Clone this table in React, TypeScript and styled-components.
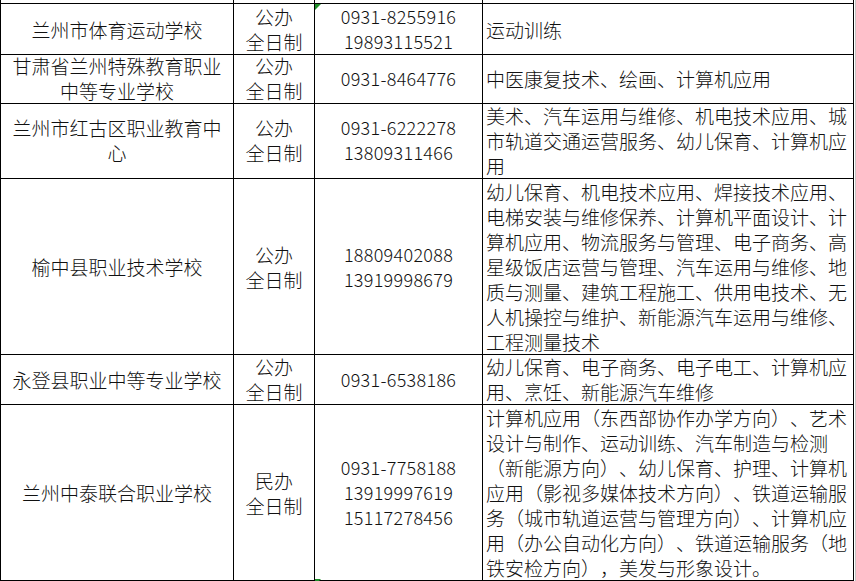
import React from "react";
import styled, { createGlobalStyle } from "styled-components";

const GlobalStyle = createGlobalStyle`
  html, body {
    margin: 0;
    padding: 0;
    background: #ffffff;
    overflow: hidden;
  }
  body {
    font-family: "Noto Sans CJK SC", "Noto Sans", sans-serif;
    color: #111;
    text-spacing-trim: space-all;
  }
`;

type School = {
  name: string[];
  kind: string[];
  phones: string[];
  majors: string[];
  h: number;
  flag?: boolean;
};

const schools: School[] = [
  {
    name: ["兰州市体育运动学校"],
    kind: ["公办", "全日制"],
    phones: ["0931-8255916", "19893115521"],
    majors: ["运动训练"],
    h: 49,
    flag: true,
  },
  {
    name: ["甘肃省兰州特殊教育职业", "中等专业学校"],
    kind: ["公办", "全日制"],
    phones: ["0931-8464776"],
    majors: ["中医康复技术、绘画、计算机应用"],
    h: 49,
  },
  {
    name: ["兰州市红古区职业教育中", "心"],
    kind: ["公办", "全日制"],
    phones: ["0931-6222278", "13809311466"],
    majors: [
      "美术、汽车运用与维修、机电技术应用、城",
      "市轨道交通运营服务、幼儿保育、计算机应",
      "用",
    ],
    h: 77,
  },
  {
    name: ["榆中县职业技术学校"],
    kind: ["公办", "全日制"],
    phones: ["18809402088", "13919998679"],
    majors: [
      "幼儿保育、机电技术应用、焊接技术应用、",
      "电梯安装与维修保养、计算机平面设计、计",
      "算机应用、物流服务与管理、电子商务、高",
      "星级饭店运营与管理、汽车运用与维修、地",
      "质与测量、建筑工程施工、供用电技术、无",
      "人机操控与维护、新能源汽车运用与维修、",
      "工程测量技术",
    ],
    h: 175,
  },
  {
    name: ["永登县职业中等专业学校"],
    kind: ["公办", "全日制"],
    phones: ["0931-6538186"],
    majors: [
      "幼儿保育、电子商务、电子电工、计算机应",
      "用、烹饪、新能源汽车维修",
    ],
    h: 51,
  },
  {
    name: ["兰州中泰联合职业学校"],
    kind: ["民办", "全日制"],
    phones: ["0931-7758188", "13919997619", "15117278456"],
    majors: [
      "计算机应用（东西部协作办学方向）、艺术",
      "设计与制作、运动训练、汽车制造与检测",
      "（新能源方向）、幼儿保育、护理、计算机",
      "应用（影视多媒体技术方向）、铁道运输服",
      "务（城市轨道运营与管理方向）、计算机应",
      "用（办公自动化方向）、铁道运输服务（地",
      "铁安检方向），美发与形象设计。",
    ],
    h: 174,
  },
];

function App() {
  return (
    <>
      <GlobalStyle />
      <Page>
        <Sheet>
          <Row $h={4}>
            <Cell />
            <Cell />
            <Cell />
            <Cell />
          </Row>
          {schools.map((s, i) => (
            <Row key={i} $h={s.h}>
              <Cell>
                <Lines>
                  {s.name.map((l, k) => (
                    <Line key={k}>{l}</Line>
                  ))}
                </Lines>
              </Cell>
              <Cell>
                <Lines>
                  {s.kind.map((l, k) => (
                    <Line key={k}>{l}</Line>
                  ))}
                </Lines>
              </Cell>
              <Cell $flag={s.flag}>
                <Lines>
                  {s.phones.map((l, k) => (
                    <Phone key={k}>{l}</Phone>
                  ))}
                </Lines>
              </Cell>
              <Cell $left>
                <Lines>
                  {s.majors.map((l, k) => (
                    <Line key={k}>{l}</Line>
                  ))}
                </Lines>
              </Cell>
            </Row>
          ))}
          <Row $h={10} $open>
            <Cell />
            <Cell />
            <Cell $flag />
            <Cell />
          </Row>
        </Sheet>
        <Gutter />
      </Page>
    </>
  );
}

export default App;

const Page = styled.div`
  display: flex;
  height: 581px;
  width: 856px;
  overflow: hidden;
`;

const Sheet = styled.div`
  display: flex;
  flex-direction: column;
  border-left: 1px solid #000;
`;

const Row = styled.div<{ $h: number; $open?: boolean }>`
  display: grid;
  grid-template-columns: 233px 81px 168px 371px;
  height: ${({ $h }) => $h}px;
  flex-shrink: 0;
  & > div {
    border-bottom: ${({ $open }) => ($open ? "none" : "1px solid #000")};
  }
`;

const Cell = styled.div<{ $left?: boolean; $flag?: boolean }>`
  position: relative;
  box-sizing: border-box;
  border-right: 1px solid #000;
  display: flex;
  align-items: center;
  justify-content: ${({ $left }) => ($left ? "flex-start" : "center")};
  padding: ${({ $left }) => ($left ? "0 0 0 3px" : "0")};
  text-align: ${({ $left }) => ($left ? "left" : "center")};
  font-size: 19px;
  line-height: 25px;
  font-weight: 300;
  &::before {
    content: "";
    display: ${({ $flag }) => ($flag ? "block" : "none")};
    position: absolute;
    top: 0;
    left: 0;
    width: 0;
    height: 0;
    border-top: 6px solid #1f8f2a;
    border-right: 6px solid transparent;
  }
`;

const Lines = styled.div`
  display: flex;
  flex-direction: column;
`;

const Line = styled.span`
  white-space: nowrap;
`;

const Phone = styled.span`
  white-space: nowrap;
  font-size: 18px;
  letter-spacing: 0.3px;
`;

const Gutter = styled.div`
  width: 2px;
  margin-left: 1px;
  background: #c4c4c4;
`;
